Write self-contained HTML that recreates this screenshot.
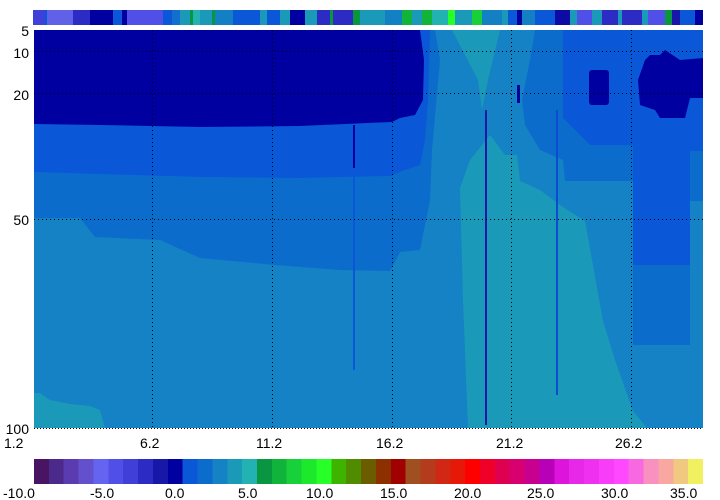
<!DOCTYPE html>
<html><head><meta charset="utf-8"><style>
html,body{margin:0;padding:0;background:#fff;width:720px;height:500px;overflow:hidden}
svg{display:block}
text{font-family:"Liberation Sans",sans-serif;font-size:14px;fill:#000}
</style></head><body>
<svg width="720" height="500" viewBox="0 0 720 500" xmlns="http://www.w3.org/2000/svg" shape-rendering="crispEdges">
<!-- top strip -->
<g transform="translate(0,10)">
<rect x="33" width="12" height="15" fill="#4040d8"/>
<rect x="45" width="2" height="15" fill="#0a58d8"/>
<rect x="47" width="26" height="15" fill="#6060e8"/>
<rect x="73" width="17" height="15" fill="#2c2cc4"/>
<rect x="90" width="23" height="15" fill="#0000a0"/>
<rect x="113" width="9" height="15" fill="#0a58d8"/>
<rect x="122" width="5" height="15" fill="#0000a0"/>
<rect x="127" width="36" height="15" fill="#5050e8"/>
<rect x="163" width="9" height="15" fill="#0a58d8"/>
<rect x="172" width="8" height="15" fill="#1270cc"/>
<rect x="180" width="10" height="15" fill="#1a9ab8"/>
<rect x="190" width="3" height="15" fill="#0a9640"/>
<rect x="193" width="7" height="15" fill="#22b2b2"/>
<rect x="200" width="12" height="15" fill="#1a9ab8"/>
<rect x="212" width="3" height="15" fill="#0a9640"/>
<rect x="215" width="18" height="15" fill="#1480c4"/>
<rect x="233" width="27" height="15" fill="#0a58d8"/>
<rect x="260" width="7" height="15" fill="#1a9ab8"/>
<rect x="267" width="13" height="15" fill="#0a58d8"/>
<rect x="280" width="10" height="15" fill="#1a9ab8"/>
<rect x="290" width="15" height="15" fill="#0000a0"/>
<rect x="305" width="12" height="15" fill="#1a9ab8"/>
<rect x="317" width="13" height="15" fill="#2c2cc4"/>
<rect x="330" width="3" height="15" fill="#0a9640"/>
<rect x="333" width="20" height="15" fill="#2c2cc4"/>
<rect x="353" width="7" height="15" fill="#0a9640"/>
<rect x="360" width="25" height="15" fill="#1a9ab8"/>
<rect x="385" width="17" height="15" fill="#1480c4"/>
<rect x="402" width="10" height="15" fill="#10b43a"/>
<rect x="412" width="10" height="15" fill="#1a9ab8"/>
<rect x="422" width="10" height="15" fill="#10b43a"/>
<rect x="432" width="16" height="15" fill="#22b2b2"/>
<rect x="448" width="7" height="15" fill="#28ff28"/>
<rect x="455" width="17" height="15" fill="#1a9ab8"/>
<rect x="472" width="10" height="15" fill="#18d03a"/>
<rect x="482" width="20" height="15" fill="#1480c4"/>
<rect x="502" width="6" height="15" fill="#1a9ab8"/>
<rect x="508" width="9" height="15" fill="#0a58d8"/>
<rect x="517" width="5" height="15" fill="#0000a0"/>
<rect x="522" width="13" height="15" fill="#1480c4"/>
<rect x="535" width="20" height="15" fill="#0a58d8"/>
<rect x="555" width="15" height="15" fill="#0c0ca4"/>
<rect x="570" width="7" height="15" fill="#1a9ab8"/>
<rect x="577" width="15" height="15" fill="#5050e8"/>
<rect x="592" width="10" height="15" fill="#1a9ab8"/>
<rect x="602" width="16" height="15" fill="#2c2cc4"/>
<rect x="618" width="4" height="15" fill="#1a9ab8"/>
<rect x="622" width="20" height="15" fill="#2c2cc4"/>
<rect x="642" width="6" height="15" fill="#1a9ab8"/>
<rect x="648" width="17" height="15" fill="#5050e8"/>
<rect x="665" width="7" height="15" fill="#0a9640"/>
<rect x="672" width="8" height="15" fill="#1818a8"/>
<rect x="680" width="15" height="15" fill="#0a58d8"/>
<rect x="695" width="8" height="15" fill="#0000a0"/>
</g>
<!-- plot -->
<rect x="34" y="30" width="669" height="398" fill="#1482c4"/>
<g shape-rendering="auto">
<polygon fill="#0c6ccc" points="34,30 435,30 440,60 432,150 430,200 420,250 400,252 390,271 340,270 275,265 200,258 160,240 95,237 80,218 34,218"/>
<polygon fill="#0c6ccc" points="535,30 703,30 703,201 690,201 690,345 633,345 633,181 565,181 563,160 540,150 525,125 522,100 530,60"/>
<polygon fill="#0a58d8" points="34,30 430,30 428,100 425,140 420,165 405,170 390,176 300,178 200,177 100,174 34,172"/>
<polygon fill="#0a58d8" points="563,30 703,30 703,151 690,151 690,265 633,265 633,145 590,145 563,118"/>
<polygon fill="#0000a0" points="34,30 420,30 424,60 423,100 415,115 400,118 392,122 300,126 200,127 100,125 34,124"/>
<rect x="589" y="70" width="20" height="35" rx="3" fill="#0000a0"/>
<polygon fill="#0000a0" points="645,60 650,55 660,55 665,50 680,60 703,58 703,98 690,98 685,118 660,118 655,110 640,105 638,80"/>
<polygon fill="#1a9ab8" points="452,30 500,30 488,80 482,110 478,80"/>
<polygon fill="#1a9ab8" points="460,188 470,160 490,135 505,155 517,155 520,181 540,190 560,205 585,221 603,321 615,360 633,411 647,428 468,428 463,300"/>
<polygon fill="#1a9ab8" points="34,393 40,393 50,400 70,404 90,406 100,410 105,428 34,428"/>
</g>
<rect x="485" y="110" width="2" height="315" fill="#1818a8"/>
<rect x="556" y="110" width="2" height="285" fill="#0c4cd0"/>
<rect x="353" y="125" width="2" height="43" fill="#0000a0"/>
<rect x="353" y="168" width="2" height="202" fill="#0a58d8"/>
<rect x="517" y="85" width="3" height="18" fill="#0000a0"/>
<!-- grid -->
<g stroke="#000" stroke-width="1" stroke-dasharray="1,3">
<line x1="152.5" y1="30" x2="152.5" y2="428"/>
<line x1="272.5" y1="30" x2="272.5" y2="428"/>
<line x1="392.5" y1="30" x2="392.5" y2="428"/>
<line x1="511.5" y1="30" x2="511.5" y2="428"/>
<line x1="631.5" y1="30" x2="631.5" y2="428"/>
<line x1="34" y1="51.5" x2="703" y2="51.5"/>
<line x1="34" y1="93.5" x2="703" y2="93.5"/>
<line x1="34" y1="219.5" x2="703" y2="219.5"/>
<line x1="34" y1="428.5" x2="703" y2="428.5" stroke-dasharray="1,2"/>
</g>
<!-- y labels -->
<text x="29" y="36" text-anchor="end">5</text>
<text x="29" y="58" text-anchor="end">10</text>
<text x="29" y="100" text-anchor="end">20</text>
<text x="29" y="225" text-anchor="end">50</text>
<text x="29" y="434" text-anchor="end">100</text>
<!-- x labels -->
<text x="4" y="448">1.2</text>
<text x="140" y="448">6.2</text>
<text x="256" y="448">11.2</text>
<text x="376" y="448">16.2</text>
<text x="496" y="448">21.2</text>
<text x="615" y="448">26.2</text>
<!-- colorbar -->
<g transform="translate(34,459)">
<rect x="0" width="15" height="25" fill="#4a1464"/>
<rect x="14.87" width="15" height="25" fill="#4c2a8c"/>
<rect x="29.73" width="15" height="25" fill="#5a3cb0"/>
<rect x="44.6" width="15" height="25" fill="#6250cc"/>
<rect x="59.47" width="15" height="25" fill="#6464f0"/>
<rect x="74.33" width="15" height="25" fill="#5050e8"/>
<rect x="89.2" width="15" height="25" fill="#4040d8"/>
<rect x="104.07" width="15" height="25" fill="#2c2cc4"/>
<rect x="118.93" width="15" height="25" fill="#1818a8"/>
<rect x="133.8" width="15" height="25" fill="#0000a0"/>
<rect x="148.67" width="15" height="25" fill="#0a58d8"/>
<rect x="163.53" width="15" height="25" fill="#0c6ccc"/>
<rect x="178.4" width="15" height="25" fill="#1482c4"/>
<rect x="193.27" width="15" height="25" fill="#1a9ab8"/>
<rect x="208.13" width="15" height="25" fill="#22b2b2"/>
<rect x="223" width="15" height="25" fill="#0a9640"/>
<rect x="237.87" width="15" height="25" fill="#10b43a"/>
<rect x="252.73" width="15" height="25" fill="#18d03a"/>
<rect x="267.6" width="15" height="25" fill="#1ce82c"/>
<rect x="282.47" width="15" height="25" fill="#28ff28"/>
<rect x="297.33" width="15" height="25" fill="#3cb400"/>
<rect x="312.2" width="15" height="25" fill="#508c00"/>
<rect x="327.07" width="15" height="25" fill="#6c5c00"/>
<rect x="341.93" width="15" height="25" fill="#8c3000"/>
<rect x="356.8" width="15" height="25" fill="#a00000"/>
<rect x="371.67" width="15" height="25" fill="#a05020"/>
<rect x="386.53" width="15" height="25" fill="#b43c1c"/>
<rect x="401.4" width="15" height="25" fill="#d02814"/>
<rect x="416.27" width="15" height="25" fill="#e81808"/>
<rect x="431.13" width="15" height="25" fill="#ff0000"/>
<rect x="446" width="15" height="25" fill="#f00028"/>
<rect x="460.87" width="15" height="25" fill="#e00050"/>
<rect x="475.73" width="15" height="25" fill="#d80070"/>
<rect x="490.6" width="15" height="25" fill="#c80090"/>
<rect x="505.47" width="15" height="25" fill="#b800b8"/>
<rect x="520.33" width="15" height="25" fill="#dc14dc"/>
<rect x="535.2" width="15" height="25" fill="#e828e8"/>
<rect x="550.07" width="15" height="25" fill="#f030f0"/>
<rect x="564.93" width="15" height="25" fill="#f83cf8"/>
<rect x="579.8" width="15" height="25" fill="#ff48ff"/>
<rect x="594.67" width="15" height="25" fill="#f868e0"/>
<rect x="609.53" width="15" height="25" fill="#f890c0"/>
<rect x="624.4" width="15" height="25" fill="#f8a8a0"/>
<rect x="639.27" width="15" height="25" fill="#f0c880"/>
<rect x="654.13" width="15" height="25" fill="#f0f060"/>
</g>
<text x="3" y="498">-10.0</text>
<text x="90" y="498">-5.0</text>
<text x="165" y="498">0.0</text>
<text x="238" y="498">5.0</text>
<text x="306" y="498">10.0</text>
<text x="380" y="498">15.0</text>
<text x="454" y="498">20.0</text>
<text x="527" y="498">25.0</text>
<text x="601" y="498">30.0</text>
<text x="670" y="498">35.0</text>
</svg>
</body></html>
